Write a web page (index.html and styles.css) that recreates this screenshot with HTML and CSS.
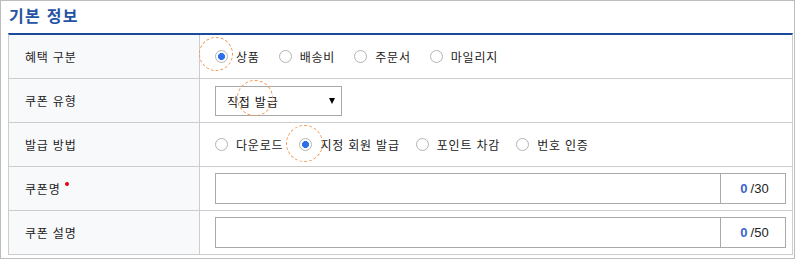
FILE: index.html
```html
<!DOCTYPE html>
<html lang="ko">
<head>
<meta charset="utf-8">
<title>기본 정보</title>
<link rel="stylesheet" href="styles.css">
</head>
<body>
<div class="panel">
  <h2 class="title">기본 정보</h2>
  <div class="form">
    <div class="row">
      <div class="th">혜택 구분</div>
      <div class="td">
        <div class="radios wide">
          <label class="opt"><span class="radio checked"></span>상품</label>
          <label class="opt"><span class="radio"></span>배송비</label>
          <label class="opt"><span class="radio"></span>주문서</label>
          <label class="opt"><span class="radio"></span>마일리지</label>
        </div>
        <span class="mark mark1"></span>
      </div>
    </div>
    <div class="row">
      <div class="th">쿠폰 유형</div>
      <div class="td">
        <div class="select"><span>직접 발급</span><span class="arrow"></span></div>
        <span class="mark mark2"></span>
      </div>
    </div>
    <div class="row">
      <div class="th">발급 방법</div>
      <div class="td">
        <div class="radios">
          <label class="opt"><span class="radio"></span>다운로드</label>
          <label class="opt"><span class="radio checked"></span>지정 회원 발급</label>
          <label class="opt"><span class="radio"></span>포인트 차감</label>
          <label class="opt"><span class="radio"></span>번호 인증</label>
        </div>
        <span class="mark mark3"></span>
      </div>
    </div>
    <div class="row">
      <div class="th">쿠폰명<span class="req"></span></div>
      <div class="td">
        <div class="input"><span class="field"></span><span class="count"><b>0</b>/30</span></div>
      </div>
    </div>
    <div class="row">
      <div class="th">쿠폰 설명</div>
      <div class="td">
        <div class="input"><span class="field"></span><span class="count"><b>0</b>/50</span></div>
      </div>
    </div>
  </div>
</div>
</body>
</html>
```

FILE: styles.css
```css
* { box-sizing: border-box; }
html, body { margin: 0; padding: 0; background: #fff; }
body {
  font-family: "Noto Sans CJK KR", "Noto Sans", sans-serif;
  font-size: 12px;
  letter-spacing: 0.8px;
  color: #222;
}
.panel {
  width: 795px;
  height: 259px;
  border: 1px solid #bdbdbd;
  padding: 0 1px 0 7px;
}
.title {
  margin: 0;
  height: 32px;
  line-height: 29px;
  padding-left: 1px;
  font-size: 16px;
  font-weight: bold;
  letter-spacing: 1.3px;
  color: #2453a3;
}
.form {
  border-top: 2px solid #1a4b9a;
  border-left: 1px solid #cdcdcd;
  border-right: 1px solid #cdcdcd;
}
.row {
  display: grid;
  grid-template-columns: 191px 1fr;
  height: 44px;
  border-bottom: 1px solid #cdcdcd;
}
.th {
  background: #f8f9fb;
  border-right: 1px solid #cdcdcd;
  display: flex;
  align-items: center;
  padding-left: 16px;
  color: #1e1e1e;
}
.req {
  width: 4px;
  height: 4px;
  border-radius: 50%;
  background: #e60012;
  margin-left: 4px;
  align-self: flex-start;
  margin-top: 15px;
}
.td {
  position: relative;
  display: flex;
  align-items: center;
  padding: 0 6px 0 15px;
}
.radios { display: flex; align-items: center; }
.opt { display: flex; align-items: center; gap: 8px; margin-left: 16px; }
.radios.wide .opt { margin-left: 19px; }
.radios .opt:first-child { margin-left: 0; }
.radio {
  width: 13px;
  height: 13px;
  border-radius: 50%;
  border: 1px solid #b4b4b4;
  background: #fff;
}
.radio.checked {
  background: radial-gradient(circle, #2c6fe8 0, #2c6fe8 3.2px, #fff 3.8px);
}
.select {
  width: 127px;
  height: 30px;
  border: 1px solid #a9a9a9;
  display: flex;
  align-items: center;
  justify-content: space-between;
  padding: 1px 6px 0 11px;
  color: #111;
}
.arrow {
  width: 0;
  height: 0;
  border-left: 3.5px solid transparent;
  border-right: 3.5px solid transparent;
  border-top: 6px solid #000;
}
.input {
  width: 571px;
  height: 31px;
  border: 1px solid #aaaaaa;
  display: flex;
}
.field { flex: 1; }
.count {
  width: 65px;
  border-left: 1px solid #aaaaaa;
  display: flex;
  align-items: center;
  justify-content: center;
  font-family: "Liberation Sans", Arial, sans-serif;
  font-size: 13px;
  letter-spacing: 0;
  color: #222;
  padding-left: 3px;
}
.count b { color: #3b64d0; font-weight: bold; margin-right: 3px; }
.mark {
  position: absolute;
  border: 1px dashed #f29a55;
  border-radius: 50%;
  pointer-events: none;
}
.mark1 { left: -1px; top: 2px; width: 34px; height: 34px; }
.mark2 { left: 37px; top: 1px; width: 36px; height: 36px; }
.mark3 { left: 86px; top: 2px; width: 37px; height: 37px; }
```
